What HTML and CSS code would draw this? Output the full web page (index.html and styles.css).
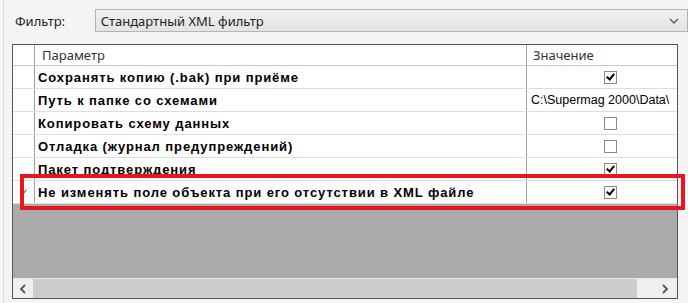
FILE: index.html
```html
<!DOCTYPE html>
<html lang="ru">
<head>
  <meta charset="UTF-8">
  <link rel="stylesheet" href="styles.css">
</head>
<body>

<div class="window">
  <div class="filter-row">
    <span class="filter-label">Фильтр:</span>
    <div class="combo">
      <span>Стандартный XML фильтр</span>
      <svg class="combo-arrow" width="10" height="6" viewBox="0 0 10 6"><path d="M1 1 L5 5 L9 1" fill="none" stroke="#555" stroke-width="1.3"/></svg>
    </div>
  </div>

  <div class="grid">
    <div class="row head">
      <div class="rh"></div>
      <div class="cell name">Параметр</div>
      <div class="cell value">Значение</div>
    </div>
    <div class="row">
      <div class="rh"></div>
      <div class="cell name">Сохранять копию (.bak) при приёме</div>
      <div class="cell value"><span class="check on"></span></div>
    </div>
    <div class="row">
      <div class="rh"></div>
      <div class="cell name">Путь к папке со схемами</div>
      <div class="cell value path">C:\Supermag 2000\Data\</div>
    </div>
    <div class="row">
      <div class="rh"></div>
      <div class="cell name">Копировать схему данных</div>
      <div class="cell value"><span class="check"></span></div>
    </div>
    <div class="row">
      <div class="rh"></div>
      <div class="cell name">Отладка (журнал предупреждений)</div>
      <div class="cell value"><span class="check"></span></div>
    </div>
    <div class="row">
      <div class="rh"></div>
      <div class="cell name">Пакет подтверждения</div>
      <div class="cell value"><span class="check on"></span></div>
    </div>
    <div class="row">
      <div class="rh current">
        <svg width="6" height="6" viewBox="0 0 6 6"><path d="M0.5 3.5 L2 5 L5.5 0.5" fill="none" stroke="#666" stroke-width="1.2"/></svg>
      </div>
      <div class="cell name">Не изменять поле объекта при его отсутствии в XML файле</div>
      <div class="cell value"><span class="check on"></span></div>
    </div>
    <div class="empty"></div>
    <div class="hscroll">
      <div class="sb-btn left">
        <svg width="8" height="10" viewBox="0 0 8 10"><path d="M6 1 L2 5 L6 9" fill="none" stroke="#555" stroke-width="1.8"/></svg>
      </div>
      <div class="sb-thumb"></div>
      <div class="sb-btn right">
        <svg width="8" height="10" viewBox="0 0 8 10"><path d="M2 1 L6 5 L2 9" fill="none" stroke="#555" stroke-width="1.8"/></svg>
      </div>
    </div>

    <!-- red highlight over the last row -->
    <div class="highlight"></div>
  </div>
</div>

</body>
</html>
```

FILE: styles.css
```css
html, body {
  margin: 0;
  padding: 0;
}

body {
  width: 688px;
  height: 303px;
  background: #f4f4f4;
  font-family: "Liberation Sans", Arial, sans-serif;
  overflow: hidden;
}

.window {
  height: 303px;
  margin-left: 3px;
  border-left: 1px solid #dadada;
  padding-top: 9px;
  box-sizing: border-box;
}

/* filter combo */
.filter-row {
  display: flex;
  align-items: center;
  height: 23px;
}

.filter-label {
  width: 80px;
  padding-left: 11px;
  font-family: "Noto Sans", sans-serif;
  font-size: 13px;
  color: #222;
}

.combo {
  width: 581px;
  height: 21px;
  border: 1px solid #b4b4b4;
  background: linear-gradient(#f0f0f0, #e4e4e4);
  display: flex;
  align-items: center;
  justify-content: space-between;
  padding: 0 8px 0 5px;
  box-sizing: content-box;
  font-family: "Noto Sans", sans-serif;
  font-size: 13px;
  color: #222;
}

.combo-arrow {
  margin-top: 1px;
}

/* grid */
.grid {
  position: relative;
  margin: 12px 0 0 8px;
  width: 664px;
  border: 1px solid #555;
  background: #fff;
}

.row {
  display: flex;
  height: 23px;
  border-bottom: 1px solid #dedede;
  box-sizing: border-box;
}

.row.head {
  height: 21px;
  border-bottom: 1px solid #c8c8c8;
}

.rh {
  width: 21px;
  flex-shrink: 0;
  border-right: 1px solid #a0a0a0;
  display: flex;
  align-items: center;
  justify-content: center;
}

.cell {
  display: flex;
  align-items: center;
  overflow: hidden;
  white-space: nowrap;
}

.name {
  width: 492px;
  flex-shrink: 0;
  border-right: 1px solid #a0a0a0;
  padding-left: 3px;
  box-sizing: border-box;
  font-weight: bold;
  font-size: 13px;
  letter-spacing: 0.9px;
  color: #000;
}

.value {
  flex: 1;
  justify-content: flex-start;
  padding-left: 77px;
}

.head .name,
.head .value {
  font-family: "Noto Sans", sans-serif;
  font-weight: normal;
  font-size: 13px;
  letter-spacing: 0;
  color: #333;
}

.head .name {
  padding-left: 7px;
}

.head .value {
  padding-left: 6px;
}

.value.path {
  padding-left: 4px;
  font-size: 12.5px;
  font-family: "Liberation Sans", Arial, sans-serif;
}

.check {
  width: 11px;
  height: 11px;
  border: 1px solid #8a8a8a;
  background: #fff;
  position: relative;
}

.check.on::after {
  content: "";
  position: absolute;
  left: 3px;
  top: 0px;
  width: 3px;
  height: 6px;
  border: solid #000;
  border-width: 0 2px 2px 0;
  transform: rotate(40deg);
}

.empty {
  height: 74px;
  background: #ababab;
  border-bottom: 1px solid #e6e6e6;
}

/* horizontal scrollbar */
.hscroll {
  display: flex;
  height: 19px;
  background: #f0f0f0;
}

.sb-btn {
  display: flex;
  align-items: center;
  justify-content: center;
}

.sb-btn.left {
  width: 20px;
}

.sb-btn.right {
  width: 40px;
  justify-content: flex-end;
  padding-right: 8px;
  box-sizing: border-box;
}

.sb-thumb {
  flex: 1;
  background: #cdcdcd;
}

.highlight {
  position: absolute;
  left: 7px;
  top: 129px;
  width: 657px;
  height: 28px;
  border: 4px solid #e8141e;
}
```
